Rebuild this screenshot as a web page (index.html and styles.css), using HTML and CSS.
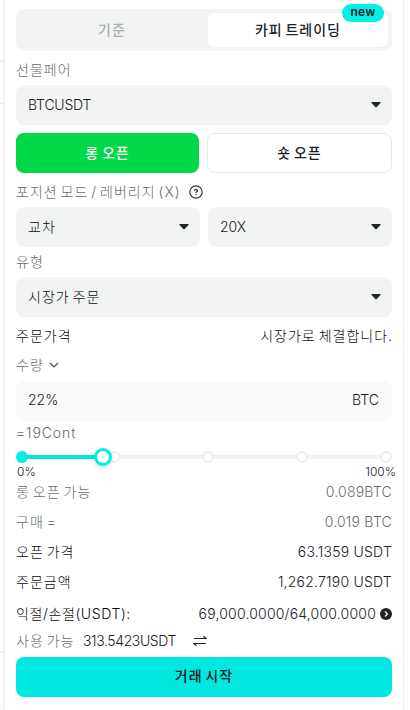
FILE: index.html
```html
<!DOCTYPE html>
<html lang="ko">
<head>
<meta charset="utf-8">
<title>카피 트레이딩</title>
<link rel="stylesheet" href="styles.css">
</head>
<body>
<div class="page">
<aside class="gutter"><i class="rule rule-a"></i><i class="rule rule-b"></i><i class="rule rule-c"></i><i class="rule rule-d"></i></aside>
<main class="panel">
  <nav class="tabs">
    <div class="tab ko">기준</div>
    <div class="tab active ko">카피 트레이딩</div>
    <span class="badge">new</span>
  </nav>
  <div class="label pair ko">선물페어</div>
  <div class="select"><span class="t-pair">BTCUSDT</span><svg class="caret" viewBox="0 0 10 6"><path d="M1 0h8q1.2 0 .4 1L5.7 5q-.7.8-1.4 0L.6 1Q-.2 0 1 0z"/></svg></div>
  <div class="sides ko">
    <div class="side long">롱 오픈</div>
    <div class="side short">숏 오픈</div>
  </div>
  <div class="label mode ko"><span>포지션 모드 / 레버리지 (X)</span>
    <svg class="help" viewBox="0 0 14 14"><circle cx="7" cy="7" r="6.2"/><path d="M5.5 5.9q0-1.6 1.5-1.6t1.5 1.4q0 .8-.9 1.2-.6.3-.6 1M7 9v1"/></svg></div>
  <div class="split">
    <div class="select"><span class="ko">교차</span><svg class="caret" viewBox="0 0 10 6"><path d="M1 0h8q1.2 0 .4 1L5.7 5q-.7.8-1.4 0L.6 1Q-.2 0 1 0z"/></svg></div>
    <div class="select"><span>20X</span><svg class="caret" viewBox="0 0 10 6"><path d="M1 0h8q1.2 0 .4 1L5.7 5q-.7.8-1.4 0L.6 1Q-.2 0 1 0z"/></svg></div>
  </div>
  <div class="label type ko">유형</div>
  <div class="select"><span class="ko">시장가 주문</span><svg class="caret" viewBox="0 0 10 6"><path d="M1 0h8q1.2 0 .4 1L5.7 5q-.7.8-1.4 0L.6 1Q-.2 0 1 0z"/></svg></div>
  <div class="row price"><span class="ko">주문가격</span><span class="ko end">시장가로 체결합니다.</span></div>
  <div class="label qty"><span class="ko">수량</span><svg class="chev" viewBox="0 0 10 6"><path d="M1 1l4 4 4-4"/></svg></div>
  <div class="field"><span>22%</span><span>BTC</span></div>
  <div class="cont">=19Cont</div>
  <svg class="slider" viewBox="0 0 376 22">
    <path class="track" d="M6 11h364"/>
    <path class="fill" d="M6 11h81"/>
    <circle class="dot" cx="98" cy="11" r="5"/>
    <circle class="dot" cx="192" cy="11" r="5"/>
    <circle class="dot" cx="286" cy="11" r="5"/>
    <circle class="dot" cx="370" cy="11" r="5"/>
    <circle class="start" cx="6" cy="11" r="6"/>
    <circle class="thumb" cx="87" cy="11" r="7.5"/>
  </svg>
  <div class="scale"><span>0%</span><span>100%</span></div>
  <div class="row muted"><span class="ko">롱 오픈 가능</span><span class="num">0.089BTC</span></div>
  <div class="row muted"><span class="ko">구매 =</span><span class="num">0.019 BTC</span></div>
  <div class="row"><span class="ko">오픈 가격</span><span class="num">63.1359 USDT</span></div>
  <div class="row"><span class="ko">주문금액</span><span class="num">1,262.7190 USDT</span></div>
  <div class="row tpsl"><span class="t-tpsl">익절/손절(USDT):</span><span class="levels"><span class="t-levels">69,000.0000/64,000.0000</span><svg class="go" viewBox="0 0 12 12"><circle cx="6" cy="6" r="6"/><path d="M5 3.5L7.5 6 5 8.5"/></svg></span></div>
  <div class="balance"><span class="free ko">사용 가능</span><span class="t-bal">313.5423USDT</span>
    <svg class="swap" viewBox="0 0 14 12"><path d="M1 3.5h12L10.5 1.3M13 8.5H1l2.5 2.2"/></svg></div>
  <div class="submit ko">거래 시작</div>
</main>
</div>
</body>
</html>
```
FILE: styles.css
```css
* { box-sizing: border-box; }
body {
  margin: 0;
  background: #fff;
  color: #1a201f;
  font: 14px/20px Inter, "Noto Sans CJK KR", sans-serif;
  font-weight: 350;
}
.ko { letter-spacing: 1px; word-spacing: -2px; }
.select .ko, .row .ko, .t-tpsl { font-weight: 300; color: #080c0b; }
.end { margin-right: -1px; }
.page { display: flex; width: 404px; height: 710px; border-right: 1px solid #f1f2f2; }
.gutter { width: 5px; border-right: 2px solid #f1f2f2; display: flex; flex-direction: column; }
.rule { height: 1px; background: #ebeded; }
.rule-a { margin-top: 60px; height: 2px; }
.rule-b { margin-top: 41px; }
.rule-c { margin-top: 547px; height: 2px; }
.rule-d { margin-top: 55px; }
.panel { width: 387px; padding: 9px 0 0 11px; white-space: nowrap; }
.tabs { position: relative; display: flex; height: 42px; padding: 4px; border-radius: 8px; background: #f2f4f4; font-weight: 500; }
.tab { flex: 1 1 0; margin-left: 4px; padding-right: 4px; line-height: 33px; text-align: center; border-radius: 7px; color: #adb0b0; }
.active { flex: 0 0 180px; background: #fff; color: #1f2524; padding: 0; }
.badge { position: absolute; right: 8px; top: -5px; width: 42px; height: 18px; border-radius: 9px; background: #00f0e4; text-align: center; font-size: 12px; line-height: 16px; font-weight: 600; letter-spacing: .2px; color: #0c1c1b; }
.label { display: flex; align-items: center; height: 34px; padding-top: 3px; color: #686d6c; font-weight: 300; }
.select { display: flex; align-items: center; justify-content: space-between; height: 40px; padding: 0 11px 0 12px; border-radius: 8px; background: #f2f4f4; }
.t-pair { letter-spacing: -.2px; }
.caret { width: 10px; height: 6px; fill: #1f2524; }
.sides { display: flex; gap: 8px; margin-top: 8px; font-weight: 500; }
.side { height: 40px; line-height: 39px; text-align: center; border-radius: 8px; }
.long { width: 183px; background: #00d749; color: #fff; }
.short { width: 185px; border: 1px solid #e8eaea; line-height: 37px; }
.mode { gap: 8px; }
.help { width: 14px; height: 14px; fill: none; stroke: #303635; stroke-width: 1.2; }
.split { display: grid; grid-template-columns: 184px 184px; gap: 8px; }
.type { height: 30px; padding-top: 0; }
.row { display: flex; align-items: center; justify-content: space-between; height: 30px; }
.price { height: 38px; }
.qty { height: 26px; padding: 0 0 6px; gap: 5px; }
.chev { width: 10px; height: 6px; fill: none; stroke: #4c5251; stroke-width: 1.2; }
.field { display: flex; align-items: center; justify-content: space-between; height: 40px; padding: 0 13px 2px 12px; border-radius: 8px; background: #f9f9f9; }
.cont { height: 25px; line-height: 23px; color: #686d6c; font-weight: 300; letter-spacing: .9px; }
.slider { display: block; width: 376px; height: 22px; overflow: visible; }
.track, .fill { stroke: #f1f3f3; stroke-width: 4; }
.fill { stroke: #00e7df; }
.dot { fill: #fff; stroke: #eceeee; stroke-width: 2; }
.start { fill: #00f0e4; }
.thumb { fill: #fff; stroke: #00f0e4; stroke-width: 3; filter: drop-shadow(0 2px 2px rgba(0, 0, 0, .15)); }
.scale { display: flex; justify-content: space-between; height: 9px; margin-right: -4px; padding-left: 1px; font-size: 12px; line-height: 8px; }
.num { letter-spacing: .22px; }
.muted, .muted .ko { color: #686d6c; font-weight: 300; }
.tpsl { height: 33px; padding-top: 1px; }
.row .t-tpsl { letter-spacing: .6px; }
.levels { display: flex; align-items: center; gap: 4px; }
.t-levels { letter-spacing: .2px; }
.go { width: 12px; height: 12px; }
.go circle { fill: #1f2524; }
.go path { fill: none; stroke: #fff; stroke-width: 1.2; }
.balance { display: flex; align-items: center; height: 27px; padding-bottom: 5px; }
.free { width: 67px; color: #686d6c; font-weight: 300; }
.t-bal { letter-spacing: -.4px; }
.swap { width: 14px; height: 12px; margin-left: 17px; fill: none; stroke: #1f2524; stroke-width: 1.2; }
.submit { height: 40px; line-height: 38px; text-align: center; border-radius: 8px; background: #00e7df; font-weight: 500; color: #0b1716; }
```
